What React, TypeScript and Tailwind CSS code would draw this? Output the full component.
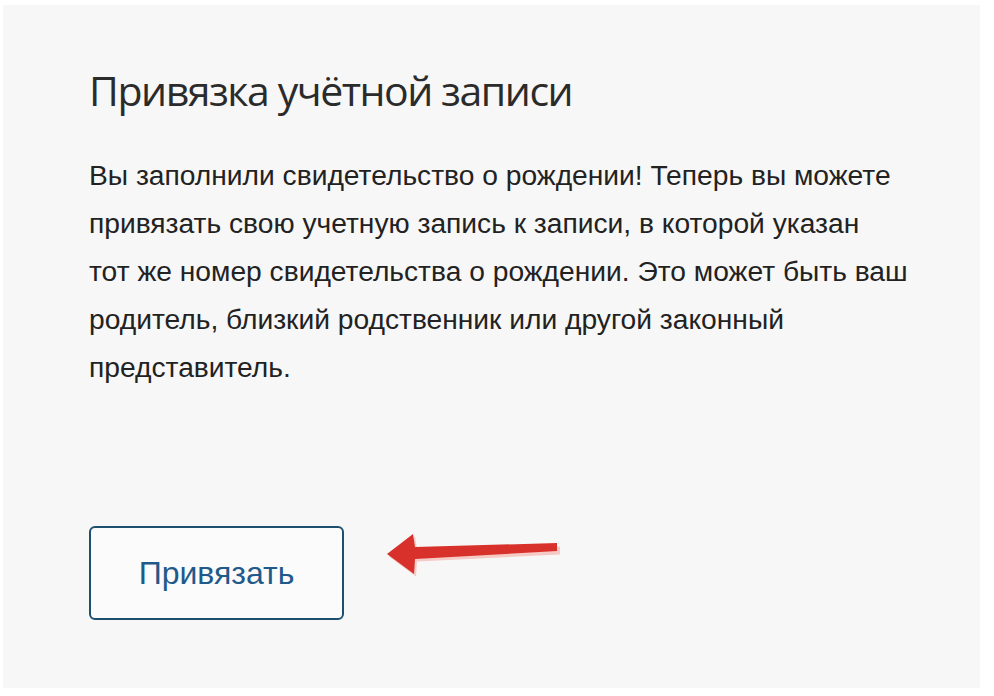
import React from "react";

export default function App() {
  return (
    <div className="w-[994px] h-[696px] bg-white overflow-hidden pt-[5px] pl-[3px]">
      <div className="w-[977px] h-[683px] bg-[#f7f7f7] pl-[86px] pt-[59px]">
        <h1
          className="text-[#2b2b2b] text-[41px] leading-[52px] tracking-[-1.45px] m-0"
          style={{ fontFamily: '"Open Sans", "Noto Sans", sans-serif', fontWeight: 400 }}
        >
          Привязка учётной записи
        </h1>
        <p
          className="mt-[35px] w-[860px] text-[#222] text-[28.2px] leading-[48px]"
          style={{ fontFamily: '"Liberation Sans", Arial, sans-serif' }}
        >
          Вы заполнили свидетельство о рождении! Теперь вы можете
          <br />
          привязать свою учетную запись к записи, в которой указан
          <br />
          тот же номер свидетельства о рождении. Это может быть ваш
          <br />
          родитель, близкий родственник или другой законный
          <br />
          представитель.
        </p>
        <div className="mt-[135px] flex items-start">
          <button
            className="w-[255px] h-[94px] border-2 border-[#1d4f6e] rounded-[6px] bg-[#fbfbfb] text-[#1f5a8a] text-[32px] flex items-center justify-center"
            style={{ fontFamily: '"Liberation Sans", Arial, sans-serif' }}
          >
            Привязать
          </button>
          <svg width="180" height="50" viewBox="0 0 180 50" className="ml-[41px] mt-[2px]">
            <path
              d="M3 27 L29 7 L31 20 L174 17 L174 25 L31 32 L30 47 Z"
              fill="#f5c9c4"
              transform="translate(1,1.5)"
            />
            <path
              d="M2 26 L28 6 L30 19 L172 15 L172 23 L30 31 L29 46 Z"
              fill="#d8302a"
            />
          </svg>
        </div>
      </div>
    </div>
  );
}
